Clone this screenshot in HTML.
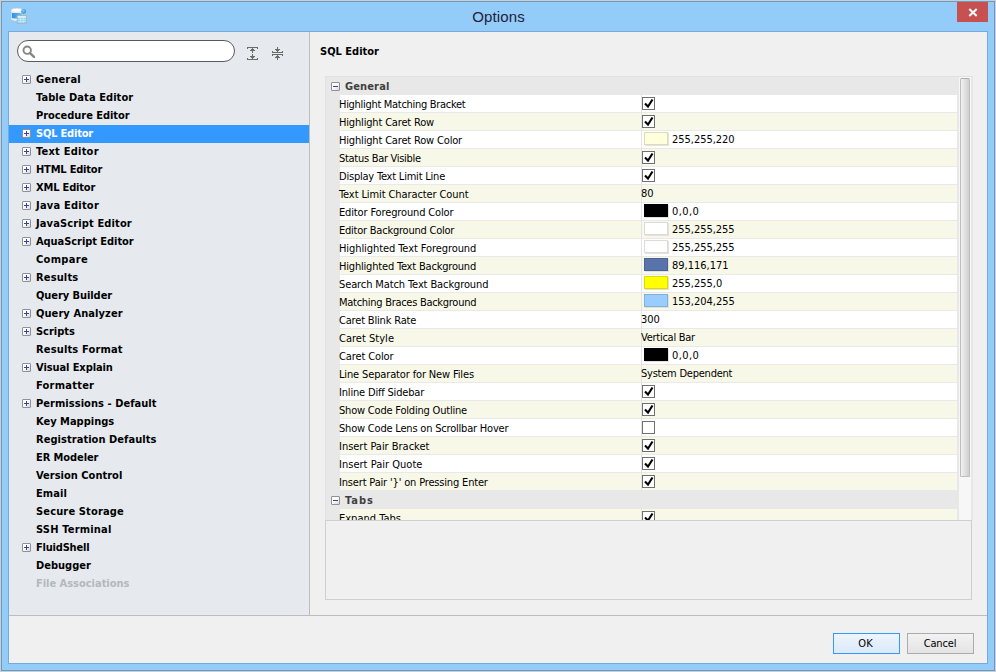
<!DOCTYPE html>
<html lang="en">
<head>
<meta charset="utf-8">
<title>Options</title>
<style>
html,body{margin:0;padding:0;}
body{width:996px;height:672px;overflow:hidden;position:relative;background:#cfcdca;font-family:"DejaVu Sans Condensed","Liberation Sans",sans-serif;font-size:11px;color:#000;}
.abs{position:absolute;}
#frame{left:1px;top:1px;width:992px;height:668px;border:1px solid #6a9ac6;background:#93cbf9;}
#title{left:0;top:8px;width:996px;text-align:center;font-family:"Liberation Sans",sans-serif;font-size:15px;letter-spacing:.15px;padding-left:1px;box-sizing:border-box;line-height:18px;color:#222238;}
#close{left:957px;top:2px;width:31px;height:20px;background:#c75050;}
#content{left:8px;top:31px;width:978px;height:631px;border:1px solid #78a9d8;background:#f0f0f0;}
#left{left:9px;top:32px;width:300px;height:583px;background:#e6eaee;}
#vsep{left:309px;top:32px;width:1px;height:583px;background:#bcbcbc;}
#hsep{left:9px;top:615px;width:978px;height:1px;background:#bdbdbd;}
#search{left:17px;top:40px;width:216px;height:20px;border:1px solid #5a5a5a;border-radius:11px;background:#fff;}
.b{font-weight:bold;}
.ti{left:9px;width:300px;height:18px;line-height:18px;white-space:nowrap;}
.ti span{position:absolute;left:27px;top:0;}
.ti.sel{background:#3399ff;color:#fff;}
.ti.dis{color:#b4b8bc;}
.pm{position:absolute;left:13px;top:4px;width:7px;height:7px;border:1px solid #919191;border-radius:1px;background:linear-gradient(135deg,#fff 0%,#fff 40%,#d8d8d8 100%);}
.pm i{position:absolute;left:1px;top:3px;width:5px;height:1px;background:#3346a4;}
.pm b{position:absolute;left:3px;top:1px;width:1px;height:5px;background:#3346a4;}
#heading{left:320px;top:43px;line-height:18px;}
#tbl{left:325px;top:76px;width:646px;height:443px;border:1px solid #e2e2e2;border-right-color:#e6e6e6;border-bottom:none;background:#e8e8e8;overflow:hidden;}
.cat{left:0;width:632px;height:18px;line-height:18px;color:#404040;}
.cat span{position:absolute;left:19px;top:1px;}
.cat .pm{left:5px;top:5px;}
.r{left:14px;width:617px;height:17px;line-height:18px;background:#fff;border-bottom:1px solid #e9e9e9;white-space:nowrap;}
.r.alt{background:#f8f8e9;}
.r .n{position:absolute;left:-1px;top:1px;}
.r .v{position:absolute;left:301px;top:0;}
.r .vs{position:absolute;left:301px;top:-1px;width:1px;height:19px;background:#e4e4e4;}
.cb{position:absolute;left:302px;top:2px;width:11px;height:11px;border:1px solid #707070;background:#fff;}
.cb svg{position:absolute;left:0;top:0;}
.sw{position:absolute;left:304px;top:1px;width:22px;height:11px;border:1px solid rgba(0,0,0,.14);box-shadow:1px 1px 0 #e2e2d8;}
.r .cv{position:absolute;left:332px;top:0;}
#track{left:633px;top:0;width:12px;height:443px;background:#f7f7f7;}
#thumb{left:634px;top:1px;width:8px;height:397px;border:1px solid #bdbdbd;border-top-color:#adadad;border-radius:1.5px;background:linear-gradient(90deg,#f2f2f2,#cfcfcf);}
#desc{left:325px;top:520px;width:645px;height:78px;border:1px solid #cfcfcf;background:#f0f0f0;}
.btn{top:633px;width:65px;height:19px;line-height:19px;text-align:center;border:1px solid #acacac;background:linear-gradient(#f2f2f2,#e4e4e4);}
#ok{left:833px;text-indent:-2px;border-color:#3399ff;background:linear-gradient(#eef5fd,#dbe9f9);}
#cancel{left:907px;letter-spacing:-.15px;text-indent:-1px;}
</style>
</head>
<body>
<div id="frame" class="abs"></div>
<svg class="abs" style="left:11px;top:8px" width="17" height="17" viewBox="0 0 17 17">
<defs><linearGradient id="gb" x1="0" x2="1" y1="0" y2="0"><stop offset="0" stop-color="#2c8be2"/><stop offset=".55" stop-color="#4aaef0"/><stop offset="1" stop-color="#7ccff8"/></linearGradient>
<radialGradient id="gc" cx=".45" cy=".4" r=".6"><stop offset="0" stop-color="#8fd4f8"/><stop offset="1" stop-color="#2f7fd6"/></radialGradient></defs>
<path d="M0.300 2.200v8.700c0 1.100 2.500 1.800 5.600 1.800s5.600-.7 5.600-1.800v-8.700z" fill="#f3efeb"/>
<path d="M0.300 4.500c0 .4 2.500 .6 5.600 .6s5.600-.2 5.600-.6v5.300c0 .5-2.500 .7-5.600 .7s-5.600-.2-5.600-.7z" fill="url(#gb)"/>
<path d="M0.300 4.500v5.300c.1.150.3.250.7.350v-5.300c-.4-.1-.6-.2-.7-.350z" fill="#e4f0fa"/>
<ellipse cx="5.900" cy="2.200" rx="5.600" ry="1.900" fill="#fdfdfd" stroke="#ddd6cf" stroke-width=".5"/>
<circle cx="12.600" cy="3.300" r="2.400" fill="url(#gc)"/>
<rect x="6.200" y="7.700" width="9.300" height="7.800" fill="#86d8fa" stroke="#b3b1ae" stroke-width=".9"/>
<rect x="6.700" y="8.200" width="8.300" height="1.500" fill="#f4f4f4"/>
<path d="M9.400 9.700v5.400M12.200 9.700v5.400M6.700 11.600h8.300M6.700 13.400h8.300" stroke="#d3f0fc" stroke-width=".6" fill="none"/>
</svg>
<div id="title" class="abs">Options</div>
<div id="close" class="abs"><svg width="31" height="20" viewBox="0 0 31 20"><path d="M12.300 7.100l7.400 6.800M19.700 7.100l-7.400 6.800" stroke="#fff" stroke-width="2" fill="none"/></svg></div>
<div id="content" class="abs"></div>
<div id="left" class="abs"></div>
<div id="vsep" class="abs"></div>
<div id="hsep" class="abs"></div>
<div id="search" class="abs"><svg width="30" height="20" viewBox="0 0 30 20" style="position:absolute;left:0;top:0"><circle cx="9.200" cy="9.200" r="3.700" fill="none" stroke="#858585" stroke-width="1.900"/><path d="M12.300 12.300l3.700 3.600" stroke="#858585" stroke-width="2.400" stroke-linecap="round"/></svg></div>
<svg class="abs" style="left:247px;top:47px" width="11" height="13" viewBox="0 0 11 13" shape-rendering="crispEdges"><path d="M0.500 2v-1.500h10v1.500M0.500 11v1.500h10v-1.500M5.500 1v5M5.500 7v5" stroke="#6a6a6a" fill="none"/><path d="M4 2h3v1h1v1h-5v-1h1zM3 9h5v1h-1v1h-3v-1h-1z" fill="#6a6a6a"/></svg>
<svg class="abs" style="left:272px;top:47px" width="11" height="13" viewBox="0 0 11 13" shape-rendering="crispEdges"><path d="M0.500 4v1.500h10v-1.500M0.500 9v-1.500h10v1.500M5.500 0v5M5.500 8v5" stroke="#6a6a6a" fill="none"/><path d="M3 2h5v1h-1v1h-3v-1h-1zM4 9h3v1h1v1h-5v-1h1z" fill="#6a6a6a"/></svg>
<div class="ti abs b" style="top:71px"><div class="pm"><i></i><b></b></div><span style="letter-spacing:0.18px">General</span></div>
<div class="ti abs b" style="top:89px"><span style="letter-spacing:0.07px">Table Data Editor</span></div>
<div class="ti abs b" style="top:107px"><span style="letter-spacing:-0.05px">Procedure Editor</span></div>
<div class="ti abs b sel" style="top:125px"><div class="pm"><i></i><b></b></div><span style="letter-spacing:-0.19px">SQL Editor</span></div>
<div class="ti abs b" style="top:143px"><div class="pm"><i></i><b></b></div><span style="letter-spacing:0.23px">Text Editor</span></div>
<div class="ti abs b" style="top:161px"><div class="pm"><i></i><b></b></div><span style="letter-spacing:-0.20px">HTML Editor</span></div>
<div class="ti abs b" style="top:179px"><div class="pm"><i></i><b></b></div><span style="letter-spacing:-0.17px">XML Editor</span></div>
<div class="ti abs b" style="top:197px"><div class="pm"><i></i><b></b></div><span style="letter-spacing:0.22px">Java Editor</span></div>
<div class="ti abs b" style="top:215px"><div class="pm"><i></i><b></b></div><span style="letter-spacing:0.13px">JavaScript Editor</span></div>
<div class="ti abs b" style="top:233px"><div class="pm"><i></i><b></b></div><span style="letter-spacing:-0.06px">AquaScript Editor</span></div>
<div class="ti abs b" style="top:251px"><span style="letter-spacing:0.33px">Compare</span></div>
<div class="ti abs b" style="top:269px"><div class="pm"><i></i><b></b></div><span style="letter-spacing:0.15px">Results</span></div>
<div class="ti abs b" style="top:287px"><span style="letter-spacing:-0.07px">Query Builder</span></div>
<div class="ti abs b" style="top:305px"><div class="pm"><i></i><b></b></div><span style="letter-spacing:0.08px">Query Analyzer</span></div>
<div class="ti abs b" style="top:323px"><div class="pm"><i></i><b></b></div><span style="letter-spacing:-0.03px">Scripts</span></div>
<div class="ti abs b" style="top:341px"><span style="letter-spacing:0.16px">Results Format</span></div>
<div class="ti abs b" style="top:359px"><div class="pm"><i></i><b></b></div><span style="letter-spacing:-0.09px">Visual Explain</span></div>
<div class="ti abs b" style="top:377px"><span style="letter-spacing:0.24px">Formatter</span></div>
<div class="ti abs b" style="top:395px"><div class="pm"><i></i><b></b></div><span style="letter-spacing:0.05px">Permissions - Default</span></div>
<div class="ti abs b" style="top:413px"><span>Key Mappings</span></div>
<div class="ti abs b" style="top:431px"><span style="letter-spacing:0.05px">Registration Defaults</span></div>
<div class="ti abs b" style="top:449px"><span style="letter-spacing:-0.09px">ER Modeler</span></div>
<div class="ti abs b" style="top:467px"><span style="letter-spacing:0.01px">Version Control</span></div>
<div class="ti abs b" style="top:485px"><span style="letter-spacing:0.07px">Email</span></div>
<div class="ti abs b" style="top:503px"><span style="letter-spacing:0.15px">Secure Storage</span></div>
<div class="ti abs b" style="top:521px"><span style="letter-spacing:0.19px">SSH Terminal</span></div>
<div class="ti abs b" style="top:539px"><div class="pm"><i></i><b></b></div><span style="letter-spacing:-0.20px">FluidShell</span></div>
<div class="ti abs b" style="top:557px"><span style="letter-spacing:0.01px">Debugger</span></div>
<div class="ti abs b dis" style="top:575px"><span style="letter-spacing:-0.02px">File Associations</span></div>
<div id="heading" class="abs b">SQL Editor</div>
<div id="tbl" class="abs">
<div class="cat abs b" style="top:0px"><div class="pm"><i></i></div><span style="letter-spacing:.13px">General</span></div>
<div class="r abs" style="top:18px"><div class="n" style="letter-spacing:-0.30px">Highlight Matching Bracket</div><div class="vs"></div><div class="cb"><svg width="11" height="11" viewBox="0 0 11 11"><path d="M2 5.500l3 3l4.500-7" stroke="#000" stroke-width="2.100" fill="none"/></svg></div></div>
<div class="r abs alt" style="top:36px"><div class="n" style="letter-spacing:-0.17px">Highlight Caret Row</div><div class="vs"></div><div class="cb"><svg width="11" height="11" viewBox="0 0 11 11"><path d="M2 5.500l3 3l4.500-7" stroke="#000" stroke-width="2.100" fill="none"/></svg></div></div>
<div class="r abs" style="top:54px"><div class="n" style="letter-spacing:-0.17px">Highlight Caret Row Color</div><div class="vs"></div><div class="sw" style="background:rgb(255,255,220)"></div><div class="cv" style="letter-spacing:-0.03px">255,255,220</div></div>
<div class="r abs alt" style="top:72px"><div class="n" style="letter-spacing:-0.29px">Status Bar Visible</div><div class="vs"></div><div class="cb"><svg width="11" height="11" viewBox="0 0 11 11"><path d="M2 5.500l3 3l4.500-7" stroke="#000" stroke-width="2.100" fill="none"/></svg></div></div>
<div class="r abs" style="top:90px"><div class="n" style="letter-spacing:-0.21px">Display Text Limit Line</div><div class="vs"></div><div class="cb"><svg width="11" height="11" viewBox="0 0 11 11"><path d="M2 5.500l3 3l4.500-7" stroke="#000" stroke-width="2.100" fill="none"/></svg></div></div>
<div class="r abs alt" style="top:108px"><div class="n" style="letter-spacing:-0.10px">Text Limit Character Count</div><div class="vs"></div><div class="v">80</div></div>
<div class="r abs" style="top:126px"><div class="n" style="letter-spacing:-0.14px">Editor Foreground Color</div><div class="vs"></div><div class="sw" style="background:rgb(0,0,0)"></div><div class="cv" style="letter-spacing:0.42px">0,0,0</div></div>
<div class="r abs alt" style="top:144px"><div class="n" style="letter-spacing:-0.23px">Editor Background Color</div><div class="vs"></div><div class="sw" style="background:rgb(255,255,255)"></div><div class="cv" style="letter-spacing:-0.03px">255,255,255</div></div>
<div class="r abs" style="top:162px"><div class="n" style="letter-spacing:-0.08px">Highlighted Text Foreground</div><div class="vs"></div><div class="sw" style="background:rgb(255,255,255)"></div><div class="cv" style="letter-spacing:-0.03px">255,255,255</div></div>
<div class="r abs alt" style="top:180px"><div class="n" style="letter-spacing:-0.19px">Highlighted Text Background</div><div class="vs"></div><div class="sw" style="background:rgb(89,116,171)"></div><div class="cv" style="letter-spacing:-0.01px">89,116,171</div></div>
<div class="r abs" style="top:198px"><div class="n" style="letter-spacing:-0.11px">Search Match Text Background</div><div class="vs"></div><div class="sw" style="background:rgb(255,255,0)"></div><div class="cv" style="letter-spacing:-0.01px">255,255,0</div></div>
<div class="r abs alt" style="top:216px"><div class="n" style="letter-spacing:-0.28px">Matching Braces Background</div><div class="vs"></div><div class="sw" style="background:rgb(153,204,255)"></div><div class="cv" style="letter-spacing:-0.01px">153,204,255</div></div>
<div class="r abs" style="top:234px"><div class="n" style="letter-spacing:-0.18px">Caret Blink Rate</div><div class="vs"></div><div class="v">300</div></div>
<div class="r abs alt" style="top:252px"><div class="n" style="letter-spacing:0.02px">Caret Style</div><div class="vs"></div><div class="v" style="letter-spacing:-0.26px">Vertical Bar</div></div>
<div class="r abs" style="top:270px"><div class="n" style="letter-spacing:-0.12px">Caret Color</div><div class="vs"></div><div class="sw" style="background:rgb(0,0,0)"></div><div class="cv" style="letter-spacing:0.42px">0,0,0</div></div>
<div class="r abs alt" style="top:288px"><div class="n" style="letter-spacing:-0.14px">Line Separator for New Files</div><div class="vs"></div><div class="v" style="letter-spacing:-0.23px">System Dependent</div></div>
<div class="r abs" style="top:306px"><div class="n" style="letter-spacing:-0.18px">Inline Diff Sidebar</div><div class="vs"></div><div class="cb"><svg width="11" height="11" viewBox="0 0 11 11"><path d="M2 5.500l3 3l4.500-7" stroke="#000" stroke-width="2.100" fill="none"/></svg></div></div>
<div class="r abs alt" style="top:324px"><div class="n" style="letter-spacing:-0.20px">Show Code Folding Outline</div><div class="vs"></div><div class="cb"><svg width="11" height="11" viewBox="0 0 11 11"><path d="M2 5.500l3 3l4.500-7" stroke="#000" stroke-width="2.100" fill="none"/></svg></div></div>
<div class="r abs" style="top:342px"><div class="n" style="letter-spacing:-0.20px">Show Code Lens on Scrollbar Hover</div><div class="vs"></div><div class="cb"></div></div>
<div class="r abs alt" style="top:360px"><div class="n" style="letter-spacing:-0.02px">Insert Pair Bracket</div><div class="vs"></div><div class="cb"><svg width="11" height="11" viewBox="0 0 11 11"><path d="M2 5.500l3 3l4.500-7" stroke="#000" stroke-width="2.100" fill="none"/></svg></div></div>
<div class="r abs" style="top:378px"><div class="n" style="letter-spacing:0.02px">Insert Pair Quote</div><div class="vs"></div><div class="cb"><svg width="11" height="11" viewBox="0 0 11 11"><path d="M2 5.500l3 3l4.500-7" stroke="#000" stroke-width="2.100" fill="none"/></svg></div></div>
<div class="r abs alt" style="top:396px"><div class="n" style="letter-spacing:-0.17px">Insert Pair '}' on Pressing Enter</div><div class="vs"></div><div class="cb"><svg width="11" height="11" viewBox="0 0 11 11"><path d="M2 5.500l3 3l4.500-7" stroke="#000" stroke-width="2.100" fill="none"/></svg></div></div>
<div class="cat abs b" style="top:414px"><div class="pm"><i></i></div><span style="letter-spacing:1px">Tabs</span></div>
<div class="r abs alt" style="top:432px"><div class="n">Expand Tabs</div><div class="vs"></div><div class="cb"><svg width="11" height="11" viewBox="0 0 11 11"><path d="M2 5.500l3 3l4.500-7" stroke="#000" stroke-width="2.100" fill="none"/></svg></div></div>
<div id="track" class="abs"></div><div id="thumb" class="abs"></div>
</div>
<div id="desc" class="abs"></div>
<div id="ok" class="btn abs">OK</div>
<div id="cancel" class="btn abs">Cancel</div>
</body>
</html>
